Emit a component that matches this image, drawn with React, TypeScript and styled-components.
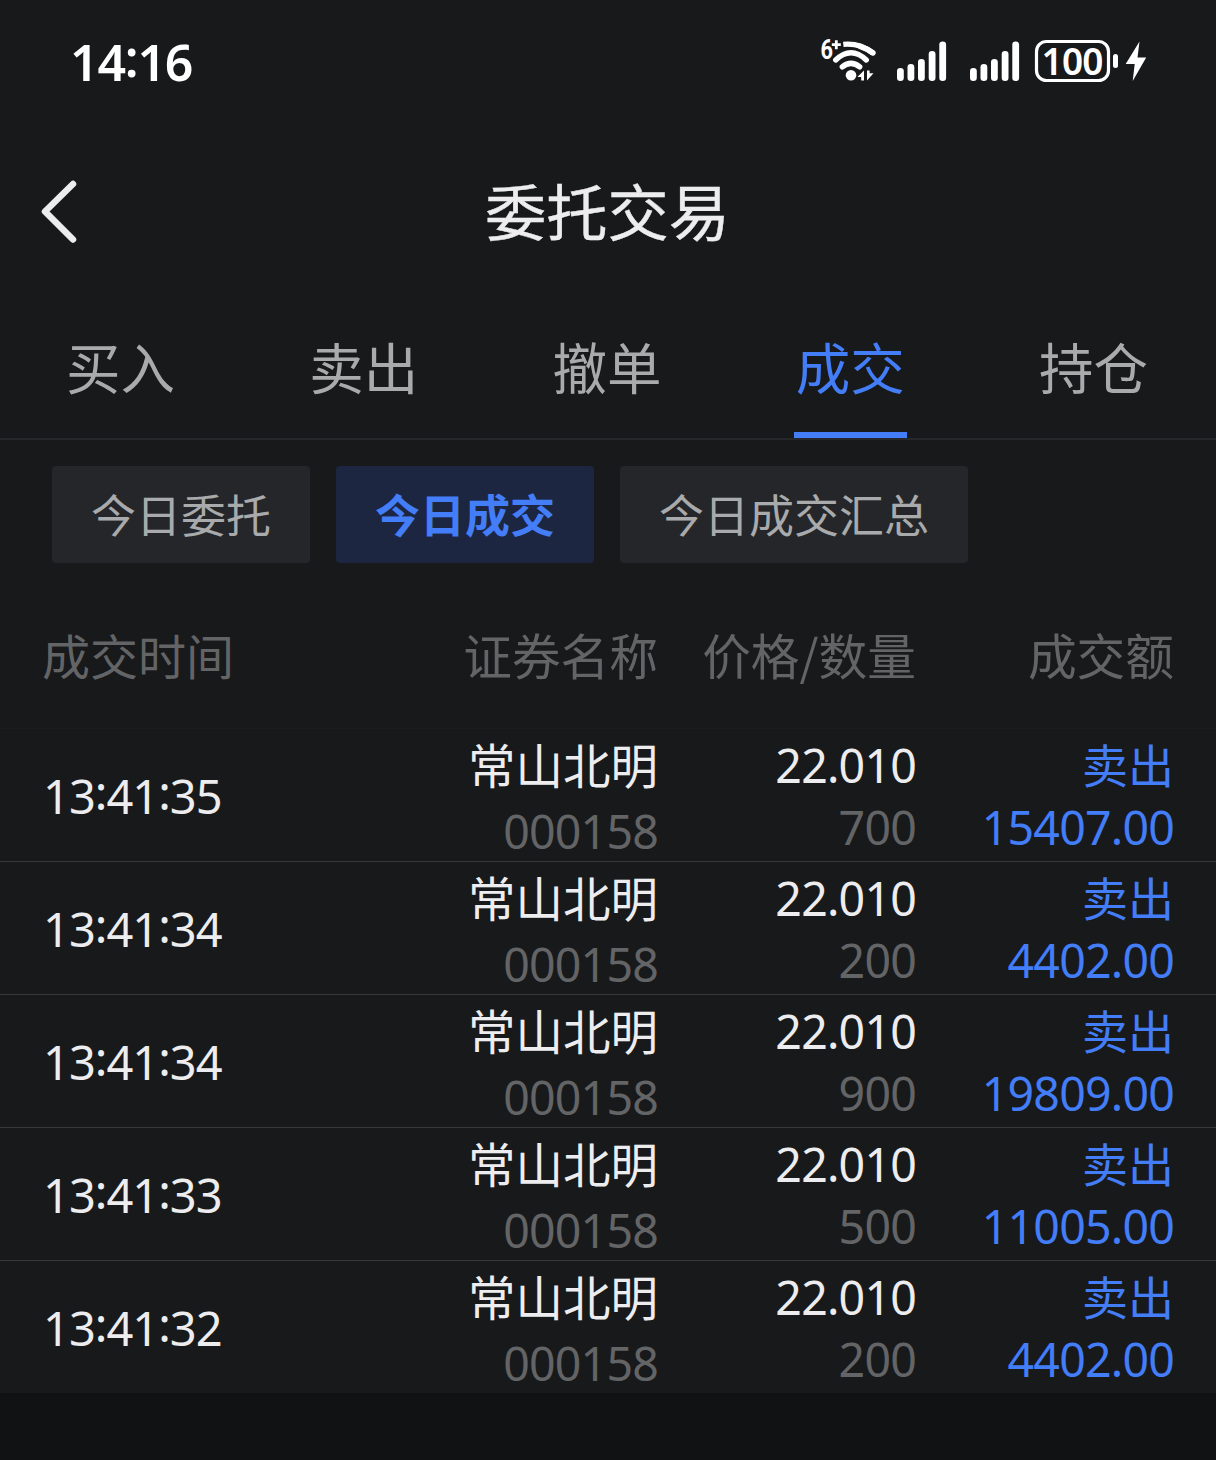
import React from "react";
import styled, { createGlobalStyle, css } from "styled-components";

const CJK = `"Noto Sans CJK SC", "Noto Sans", sans-serif`;
const LATIN = `"Noto Sans", "Noto Sans CJK SC", sans-serif`;

const GlobalStyle = createGlobalStyle`
  * { box-sizing: border-box; }
  body { margin: 0; background: #111214; }
`;

const Screen = styled.div`
  width: 1216px;
  height: 1460px;
  background: #111214;
  font-family: ${CJK};
  color: #ededef;
  overflow: hidden;
`;

const Panel = styled.main`
  height: 1393px;
  background: #18191b;
`;

const StatusBar = styled.header`
  display: flex;
  align-items: center;
  height: 124px;
  padding: 0 68px 0 70px;
  color: #fff;
`;

const Clock = styled.time`
  flex: 1;
  font: 600 50px/50px ${LATIN};
  letter-spacing: -1.2px;
`;

const Colon = styled.span`
  line-height: 0;
  vertical-align: 4px;
`;

const StatusIcons = styled.svg`
  display: block;
  width: 330px;
  height: 60px;
`;

const TitleBar = styled.div`
  display: grid;
  grid-template-columns: 80px 1fr 80px;
  align-items: center;
  height: 176px;
`;

const BackButton = styled.button`
  display: flex;
  padding: 0 0 0 38px;
  border: 0;
  background: none;
`;

const Title = styled.h1`
  margin: 0;
  padding: 0 1px 5px 0;
  text-align: center;
  font-size: 61.3px;
  font-weight: 400;
  line-height: 72px;
  -webkit-text-stroke: 0.4px currentColor;
`;

const Tabs = styled.nav`
  display: flex;
  justify-content: space-between;
  height: 140px;
  padding: 0 66px 0 64px;
  border-bottom: 2px solid #26272a;
`;

const Tab = styled.a<{ $active?: boolean }>`
  width: 113px;
  text-align: center;
  font-size: 54.5px;
  line-height: 132px;
  white-space: nowrap;
  color: ${(p) => (p.$active ? "#437df7" : "#a9aaac")};
  border-bottom: 6px solid ${(p) => (p.$active ? "#437df7" : "transparent")};
`;

const Filters = styled.div`
  display: flex;
  gap: 26px;
  padding: 26px 52px 0;
`;

const Filter = styled.button<{ $active?: boolean }>`
  height: 97px;
  padding: 0 39px 2px;
  border: 0;
  border-radius: 4px;
  font: ${(p) => (p.$active ? 700 : 400)} 45px/95px ${CJK};
  color: ${(p) => (p.$active ? "#437df7" : "#a9aaac")};
  background: ${(p) => (p.$active ? "#1d2640" : "#252629")};
`;

const columns = css`
  display: grid;
  grid-template-columns: 380px 235px 258px 258px;
  padding: 0 42px 0 43px;
`;

const HeaderRow = styled.div`
  ${columns}
  height: 165px;
  padding-left: 42px;
  grid-template-columns: 381px 235px 258px 258px;
  line-height: 182px;
  color: #636466;
`;

const HeadCell = styled.div<{ $left?: boolean }>`
  text-align: ${(p) => (p.$left ? "left" : "right")};
  white-space: nowrap;
  font-size: ${(p) => (p.$left ? 48 : 48.7)}px;
`;

const Row = styled.div<{ $first?: boolean }>`
  ${columns}
  height: 133px;
  border-top: 1px solid ${(p) => (p.$first ? "#1b1c1e" : "#37383a")};
`;

const TimeCell = styled.div`
  font: 400 47px/134px ${LATIN};
  letter-spacing: -1px;
`;

const Cell = styled.div`
  display: flex;
  flex-direction: column;
  align-items: flex-end;
  padding-top: 3px;
`;

type Tone = "light" | "muted" | "blue";
const tones: Record<Tone, string> = {
  light: "#ededef",
  muted: "#636466",
  blue: "#437df7",
};

const Label = styled.div<{ $tone: Tone; $size: number }>`
  height: 66px;
  font-size: ${(p) => p.$size}px;
  line-height: ${(p) => (p.$tone === "blue" ? 62 : 64)}px;
  color: ${(p) => tones[p.$tone]};
`;

const Figure = styled.div<{ $tone: Tone; $height: number }>`
  font: 400 46.5px / ${(p) => p.$height}px ${LATIN};
  letter-spacing: -0.8px;
  color: ${(p) => tones[p.$tone]};
`;

const tabs = ["买入", "卖出", "撤单", "成交", "持仓"];
const filters = ["今日委托", "今日成交", "今日成交汇总"];
const trades = [
  { time: "13:41:35", qty: "700", amount: "15407.00" },
  { time: "13:41:34", qty: "200", amount: "4402.00" },
  { time: "13:41:34", qty: "900", amount: "19809.00" },
  { time: "13:41:33", qty: "500", amount: "11005.00" },
  { time: "13:41:32", qty: "200", amount: "4402.00" },
];

const signal = [
  [0, 68],
  [10.5, 64],
  [21, 59],
  [31.7, 51],
  [42.3, 41.5],
];

function Signal({ x }: { x: number }) {
  return (
    <g fill="#fff">
      {signal.map(([dx, top]) => (
        <rect key={dx} x={x + dx} y={top} width="6.8" height={81 - top} rx="3.3" />
      ))}
    </g>
  );
}

function Time({ value }: { value: string }) {
  return (
    <>
      {value.split(":").map((part, i) => (
        <React.Fragment key={i}>
          {i > 0 && <Colon>:</Colon>}
          {part}
        </React.Fragment>
      ))}
    </>
  );
}

function Status() {
  return (
    <StatusIcons viewBox="818 32 330 60">
      <text x="820.5" y="59" fill="#fff" fontFamily="Roboto, sans-serif" fontWeight="700" fontSize="27" textLength="12.5" lengthAdjust="spacingAndGlyphs">6</text>
      <g fill="none" stroke="#fff" strokeWidth="5.4" strokeLinecap="round">
        <path d="M836.3 40.2v9M831.8 44.7h9" strokeWidth="2.8" strokeLinecap="butt" />
        <path d="M843.3 44.4C855 43.2 864.5 46.5 873 53" strokeLinecap="butt" />
        <path d="M860 46.3Q867 48.5 873 53" />
        <path d="M835.7 60Q851 45.5 866.3 60" />
        <path d="M842.3 66.8Q851 60 859.7 66.8" />
      </g>
      <circle cx="851" cy="75.3" r="5.3" fill="#fff" />
      <path d="M864 70.5v10h-2.800v-3.600h-3.800z M867 80.500v-10h2.600v2.800h3.900z" fill="#fff" />
      <Signal x={897} />
      <Signal x={970} />
      <rect x="1036.5" y="41.5" width="72" height="39" rx="10" fill="none" stroke="#fff" strokeWidth="3.2" />
      <text x="1041.5" y="75" fill="#fff" fontFamily="Noto Sans, sans-serif" fontWeight="600" fontSize="37" textLength="62">100</text>
      <rect x="1113" y="54" width="5" height="14" rx="2.5" fill="#fff" />
      <path d="M1139.5 41.500l-13.800 22.500h9l-2 17 13.500-23.500h-8.700z" fill="#fff" />
    </StatusIcons>
  );
}

export default function App() {
  return (
    <Screen>
      <GlobalStyle />
      <Panel>
        <StatusBar>
          <Clock>
            <Time value="14:16" />
          </Clock>
          <Status />
        </StatusBar>
        <TitleBar>
          <BackButton aria-label="返回">
            <svg width="40" height="64" viewBox="38 180 40 64" fill="none">
              <path d="M73 184L45 211.5L73 239.5" stroke="#ededef" strokeWidth="6.5" strokeLinecap="round" strokeLinejoin="round" />
            </svg>
          </BackButton>
          <Title>委托交易</Title>
        </TitleBar>
        <Tabs>
          {tabs.map((t) => (
            <Tab key={t} $active={t === "成交"}>{t}</Tab>
          ))}
        </Tabs>
        <Filters>
          {filters.map((f) => (
            <Filter key={f} $active={f === "今日成交"}>{f}</Filter>
          ))}
        </Filters>
        <HeaderRow>
          <HeadCell $left>成交时间</HeadCell>
          <HeadCell>证券名称</HeadCell>
          <HeadCell>价格/数量</HeadCell>
          <HeadCell>成交额</HeadCell>
        </HeaderRow>
        {trades.map((t, i) => (
          <Row key={i} $first={i === 0}>
            <TimeCell>
              <Time value={t.time} />
            </TimeCell>
            <Cell>
              <Label $tone="light" $size={47.5}>常山北明</Label>
              <Figure $tone="muted" $height={66}>000158</Figure>
            </Cell>
            <Cell>
              <Figure $tone="light" $height={66}>22.010</Figure>
              <Figure $tone="muted" $height={58}>{t.qty}</Figure>
            </Cell>
            <Cell>
              <Label $tone="blue" $size={46}>卖出</Label>
              <Figure $tone="blue" $height={58}>{t.amount}</Figure>
            </Cell>
          </Row>
        ))}
      </Panel>
    </Screen>
  );
}
